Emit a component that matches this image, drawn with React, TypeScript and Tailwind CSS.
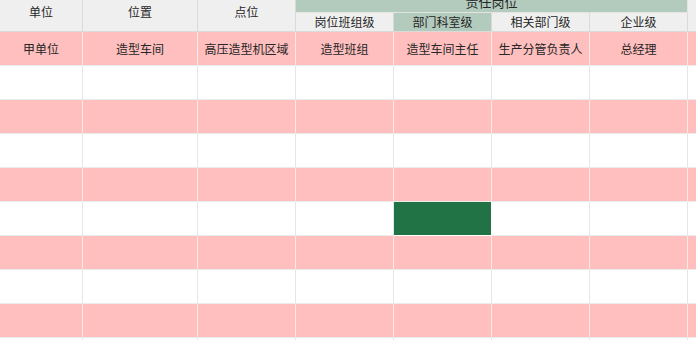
import React from 'react';

const widths = ['w-[83px]', 'w-[115px]', 'w-[98px]', 'w-[98px]', 'w-[98px]', 'w-[98px]', 'w-[98px]', 'flex-1'];

const firstRow = ['甲单位', '造型车间', '高压造型机区域', '造型班组', '造型车间主任', '生产分管负责人', '总经理', ''];

const rows: string[][] = [
    firstRow,
    ...Array.from({ length: 9 }, () => ['', '', '', '', '', '', '', '']),
];

const App: React.FC = () => {
    return (
        <div
            className="w-[696px] h-[340px] overflow-hidden bg-white text-[12px] text-[#262626]"
            style={{ fontFamily: '"Noto Sans CJK SC", "Noto Sans", sans-serif' }}
        >
            {/* header */}
            <div className="flex h-[32px] bg-[#efefef]">
                <div className="w-[83px] border-r border-b border-[#dadada] flex justify-center pt-[3px]">单位</div>
                <div className="w-[115px] border-r border-b border-[#dadada] flex justify-center pt-[3px]">位置</div>
                <div className="w-[98px] border-r border-b border-[#dadada] flex justify-center pt-[3px]">点位</div>
                <div className="w-[392px] flex flex-col">
                    <div className="h-[13px] bg-[#b3cbbd] border-r border-b border-[#e4e4e4] overflow-hidden flex justify-center">
                        <span className="-mt-[8px] leading-[20px] text-[13px]">责任岗位</span>
                    </div>
                    <div className="flex h-[19px]">
                        <div className="w-[98px] border-r border-b border-[#dadada] flex justify-center items-center leading-none">岗位班组级</div>
                        <div className="w-[98px] border-r border-b border-[#dadada] bg-[#b3cbbd] flex justify-center items-center leading-none">部门科室级</div>
                        <div className="w-[98px] border-r border-b border-[#dadada] flex justify-center items-center leading-none">相关部门级</div>
                        <div className="w-[98px] border-r border-b border-[#dadada] flex justify-center items-center leading-none">企业级</div>
                    </div>
                </div>
                <div className="flex-1 border-b border-[#dadada]" />
            </div>

            {/* body */}
            {rows.map((row, r) => {
                const pink = r % 2 === 0;
                return (
                    <div key={r} className={`flex h-[34px] ${pink ? 'bg-[#ffbfbf]' : 'bg-white'}`}>
                        {row.map((text, c) => {
                            const selected = r === 5 && c === 4;
                            return (
                                <div
                                    key={c}
                                    className={`${widths[c]} border-b border-[#ebebeb] flex items-center justify-center ${
                                        c < 7 ? (pink ? 'border-r border-r-[#fbe8e8]' : 'border-r border-r-[#e6e6e6]') : ''
                                    } ${selected ? 'bg-[#217346] border-b-white border-r-white' : ''}`}
                                >
                                    {text}
                                </div>
                            );
                        })}
                    </div>
                );
            })}
        </div>
    );
};

export default App;
